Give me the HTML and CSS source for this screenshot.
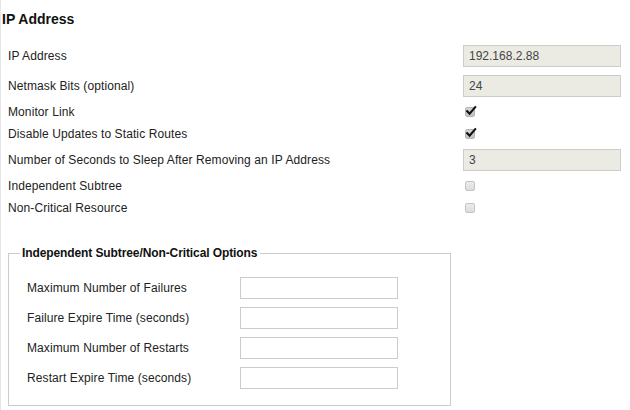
FILE: index.html
```html
<!DOCTYPE html>
<html>
<head>
<meta charset="utf-8">
<link rel="stylesheet" href="styles.css">
</head>
<body>
<div class="page">
  <h2 class="title">IP Address</h2>
  <div class="form">
    <div class="row row-input">
      <span class="label">IP Address</span>
      <input class="field field-ro" type="text" value="192.168.2.88" readonly>
    </div>
    <div class="row row-input">
      <span class="label">Netmask Bits (optional)</span>
      <input class="field field-ro" type="text" value="24" readonly>
    </div>
    <div class="row row-check">
      <span class="label">Monitor Link</span>
      <span class="check checked"><svg width="12" height="12" viewBox="0 0 12 12"><path d="M2.2 6.2 L4.6 8.6 L10.2 2.2" fill="none" stroke="#111" stroke-width="2.1" stroke-linecap="square"/></svg></span>
    </div>
    <div class="row row-check">
      <span class="label">Disable Updates to Static Routes</span>
      <span class="check checked"><svg width="12" height="12" viewBox="0 0 12 12"><path d="M2.2 6.2 L4.6 8.6 L10.2 2.2" fill="none" stroke="#111" stroke-width="2.1" stroke-linecap="square"/></svg></span>
    </div>
    <div class="row row-input">
      <span class="label">Number of Seconds to Sleep After Removing an IP Address</span>
      <input class="field field-ro" type="text" value="3" readonly>
    </div>
    <div class="row row-check">
      <span class="label">Independent Subtree</span>
      <span class="check"></span>
    </div>
    <div class="row row-check">
      <span class="label">Non-Critical Resource</span>
      <span class="check"></span>
    </div>
  </div>

  <fieldset class="options">
    <legend class="legend">Independent Subtree/Non-Critical Options</legend>
    <div class="opt-row">
      <span class="label opt-label">Maximum Number of Failures</span>
      <input class="field" type="text">
    </div>
    <div class="opt-row">
      <span class="label opt-label">Failure Expire Time (seconds)</span>
      <input class="field" type="text">
    </div>
    <div class="opt-row">
      <span class="label opt-label">Maximum Number of Restarts</span>
      <input class="field" type="text">
    </div>
    <div class="opt-row">
      <span class="label opt-label">Restart Expire Time (seconds)</span>
      <input class="field" type="text">
    </div>
  </fieldset>
</div>
</body>
</html>
```

FILE: styles.css
```css
html, body {
  margin: 0;
  padding: 0;
  background: #ffffff;
}

body {
  font-family: "Liberation Sans", Arial, sans-serif;
  font-size: 12px;
  color: #222222;
}

.page {
  width: 630px;
  height: 410px;
  box-sizing: border-box;
  border-left: 1px solid #e6e6e6;
  overflow: hidden;
}

.title {
  margin: 11px 0 0 1px;
  font-family: "Liberation Sans", Arial, sans-serif;
  font-size: 14px;
  line-height: 16px;
  font-weight: bold;
  color: #111111;
}

.form {
  margin-top: 14px;
  padding: 0 9px 0 7px;
}

.row {
  display: grid;
  grid-template-columns: 1fr 158px;
  align-items: center;
}

.row-input {
  height: 30px;
}

.row-check {
  height: 22px;
}

.label {
  line-height: 14px;
  white-space: nowrap;
  letter-spacing: 0.1px;
}

.field {
  box-sizing: border-box;
  width: 158px;
  height: 22px;
  margin: 0;
  padding: 0 0 0 5px;
  border: 1px solid #cccccc;
  border-radius: 0;
  background: #ffffff;
  font-family: "Liberation Sans", Arial, sans-serif;
  font-size: 12px;
  color: #444444;
  outline: none;
}

.field-ro {
  background: #ebebe4;
}

.check {
  position: relative;
  display: block;
  box-sizing: border-box;
  width: 10px;
  height: 10px;
  margin-left: 2px;
  border: 1px solid #c4c4c4;
  border-radius: 2px;
  background: linear-gradient(#ececec, #dcdcdc);
}

.check.checked {
  background: linear-gradient(#d6d6d6, #c2c2c2);
  border-color: #b4b4b4;
}

.check svg {
  position: absolute;
  left: -1px;
  top: -3px;
}

.options {
  box-sizing: border-box;
  width: 443px;
  margin: 27px 0 0 7px;
  padding: 13px 0 12px 18px;
  border: 1px solid #cccccc;
}

.legend {
  padding: 0 3px 0 2px;
  margin-left: -7px;
  font-weight: bold;
  font-size: 12px;
  letter-spacing: -0.1px;
  color: #111111;
}

.opt-row {
  display: grid;
  grid-template-columns: 213px 158px;
  align-items: center;
  height: 30px;
}
```
